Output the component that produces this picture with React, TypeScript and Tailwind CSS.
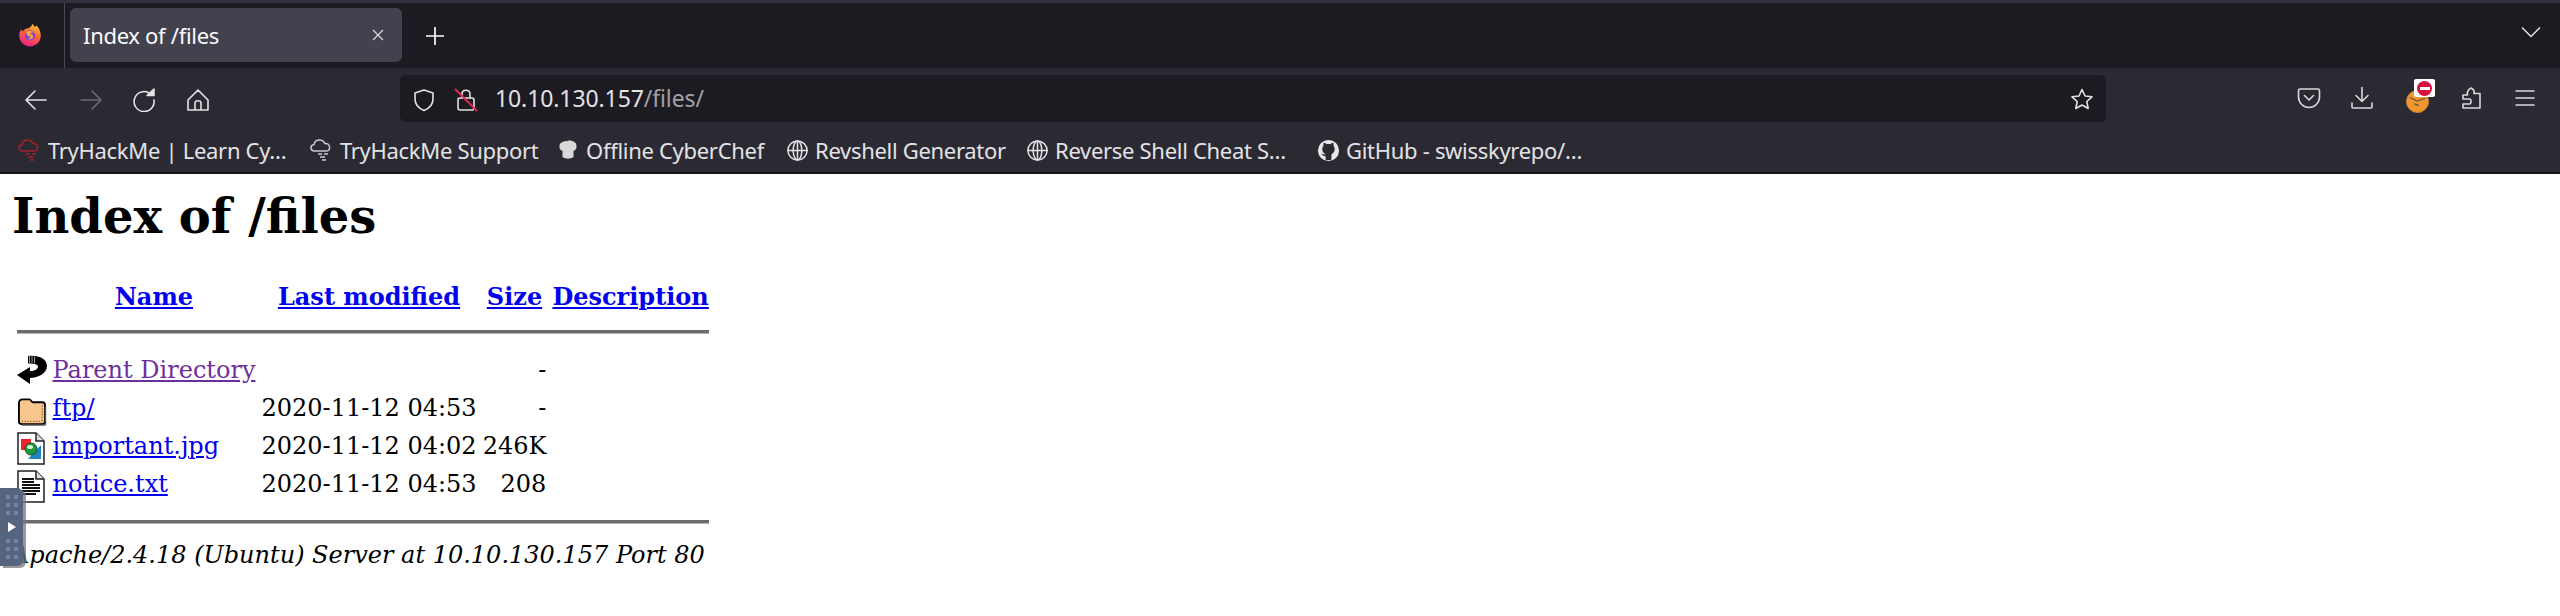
const ui = { fontFamily: '"Noto Sans", sans-serif' };

function Stroke({ className, children, box = 24 }: { className: string; children: React.ReactNode; box?: number }) {
  return (
    <svg viewBox={`0 0 ${box} ${box}`} className={className} fill="none" stroke="currentColor" strokeWidth="1.6" strokeLinecap="round" strokeLinejoin="round">
      {children}
    </svg>
  );
}

function FirefoxLogo() {
  return (
    <svg viewBox="0 0 24 24" className="w-6 h-6">
      <defs>
        <linearGradient id="ff" x1="0.7" y1="0" x2="0.3" y2="1">
          <stop offset="0" stopColor="#ffcf3a" />
          <stop offset="0.4" stopColor="#ff6a2c" />
          <stop offset="1" stopColor="#e8208a" />
        </linearGradient>
      </defs>
      <path d="M1.2 12.5C1.2 9 2.5 7.2 3.8 6.2C3.8 7.4 4.4 8 5 8.3C6.2 6.2 8.4 5.2 10.5 5.4C12.8 3.8 14 2.6 14.6.8C15.6 2 15.8 3 16.4 3.6C17.2 4.2 18 3.4 18.2 2.2C20.6 4.6 22.8 8 22.8 12.5C22.8 18.6 18 23.4 12 23.4C6 23.4 1.2 18.6 1.2 12.5Z" fill="url(#ff)" />
      <circle cx="12" cy="12.5" r="5" fill="#7542e5" />
      <path d="M8 9.500C10 7.400 14 7.600 15.500 10C13.500 9.200 12.600 10 12.400 11C14.500 11 15.600 12.600 15 14.400C14 16.400 11 16.800 9.200 15.600C11.400 15.800 12.800 14.800 12.600 13.600C10.600 13.800 9 12.600 8 9.500Z" fill="#ffa23c" />
    </svg>
  );
}

function Bookmark({ w, icon, children }: { w: string; icon: React.ReactNode; children: React.ReactNode }) {
  return (
    <div className={`flex items-center gap-[6px] shrink-0 ${w}`}>
      <span className="w-6 h-6 flex items-center justify-center shrink-0">{icon}</span>
      <span className="whitespace-nowrap text-[22px] tracking-[-0.3px] text-[#e3e3e6]">{children}</span>
    </div>
  );
}

function Globe() {
  return (
    <Stroke className="w-[23px] h-[23px] text-[#e3e3e6]">
      <circle cx="12" cy="12" r="10" />
      <ellipse cx="12" cy="12" rx="4.5" ry="10" />
      <path d="M2 12h20M12 2v20" />
    </Stroke>
  );
}

function Cloud({ red }: { red?: boolean }) {
  return (
    <svg viewBox="0 0 24 24" className={`w-6 h-6 ${red ? "text-[#a3222a]" : "text-[#c9c9cc]"}`} fill="none" stroke="currentColor" strokeWidth="1.5">
      <path d="M6 13H4.5C2.5 13 1 11.6 1 9.8C1 8 2.4 6.8 4 6.8C4.5 3.8 7 2 9.5 2C12 2 14 3.4 14.8 5.6C17 5 19.6 6.6 19.6 9.4C19.6 11.6 18 13 16 13H6Z" />
      <path d="M8 16h4M14 16h4M10 19h5M12 22h4" strokeWidth="1.3" />
    </svg>
  );
}

function ParentIcon() {
  return (
    <svg viewBox="0 0 30 33" className="w-[30px] h-[33px] block -mt-[2px]">
      <path d="M11 2C22 1 30 5 30 12C30 20 20 24 13 24L13 30L0 21L13 13L13 17C18 17 21 15 21 12.500C21 10.500 18 9.500 11 9.500Z" fill="#000" />
      <path d="M12.500 2V9.500M15 2V9.500M17.500 2.500V9.500" stroke="#9a9a9a" strokeWidth="1" />
    </svg>
  );
}

function FolderIcon() {
  return (
    <svg viewBox="0 0 32 30" className="w-[30px] h-[28px] block mt-[4px]">
      <path d="M2 6C2 3 3.500 1.500 6 1.500H13C15 1.500 15.500 4.500 17 4.500H27C29 4.500 30 6 30 8V25C30 27 29 28 27 28H5C3 28 2 27 2 25Z" fill="#f8c68c" stroke="#000" strokeWidth="2" />
      <path d="M5 25H27M27 8V25" stroke="#a06a30" strokeWidth="1.5" strokeDasharray="1.500 1.500" />
      <path d="M30.500 9V27.500C30.500 28.500 30 29 29 29H5" stroke="#555" strokeWidth="1.500" fill="none" />
    </svg>
  );
}

function ImageIcon() {
  return (
    <svg viewBox="0 0 28 33" className="w-[28px] h-[33px] block">
      <path d="M1 1H19L27 9V32H1Z" fill="#fff" stroke="#222" strokeWidth="1.500" />
      <path d="M19 1V9H27" fill="#ddd" stroke="#222" strokeWidth="1.500" />
      <rect x="4" y="7" width="10" height="11" fill="#f0232c" />
      <path d="M24 13V27H11Z" fill="#1f86c4" />
      <circle cx="14" cy="17" r="6" fill="#1a9a3c" stroke="#1b4d2a" strokeWidth="1" />
      <ellipse cx="13" cy="15" rx="3" ry="2" fill="#d9f3dc" />
    </svg>
  );
}

function TextIcon() {
  return (
    <svg viewBox="0 0 28 33" className="w-[28px] h-[33px] block">
      <path d="M1 1H19L27 9V32H1Z" fill="#fff" stroke="#222" strokeWidth="1.500" />
      <path d="M19 1V9H27" fill="#ddd" stroke="#222" strokeWidth="1.500" />
      <path d="M5 9H17M5 12H17M5 15H23M5 18H23M5 21H23M5 24H19" stroke="#111" strokeWidth="1.800" />
    </svg>
  );
}

function Row({ icon, name, date, size, visited }: { icon: React.ReactNode; name: string; date: string; size: string; visited?: boolean }) {
  return (
    <tr>
      <td className="p-[1.5px] align-top"><div className="flow-root h-[32px]">{icon}</div></td>
      <td className="p-[1.5px] align-top">
        <a href="#" className={`underline ${visited ? "text-[#6f2f9b]" : "text-[#0000ee]"}`}>{name}</a>
      </td>
      <td className="p-[1.5px] align-top text-right whitespace-nowrap">{date}</td>
      <td className="p-[1.5px] align-top text-right">{size}</td>
      <td className="p-[1.5px] align-top">&nbsp;</td>
    </tr>
  );
}

function HrRow({ className }: { className: string }) {
  return (
    <tr>
      <th colSpan={5} className={`px-[1.5px] ${className}`}>
        <div className="h-[4px] bg-[#6c6c6c] border-b border-[#b4b4b4]" />
      </th>
    </tr>
  );
}

function Dots() {
  return (
    <div className="grid grid-cols-2 gap-x-[4px] gap-y-[4px]">
      {[0, 1, 2, 3, 4, 5].map((i) => (
        <span key={i} className="w-[4px] h-[4px] bg-[#76839a]" />
      ))}
    </div>
  );
}

export default function App() {
  return (
    <div className="relative h-[616px] bg-white overflow-hidden" style={ui}>
      <div className="h-[3px] bg-[#32313d]" />
      {/* Tab bar */}
      <div className="h-[65px] bg-[#1c1b22] flex items-start text-[#fbfbfe]">
        <div className="w-[65px] h-full flex items-center pl-[18px] pb-[1px] border-r-[1px] border-[#4a4953] shrink-0">
          <FirefoxLogo />
        </div>
        <div className="mt-[5px] ml-[5px] w-[332px] h-[54px] rounded-[6px] bg-[#42414d] flex items-center pl-[13px] pr-[16px] shrink-0">
          <span className="text-[22px] tracking-[-0.3px] flex-1 whitespace-nowrap">Index of /files</span>
          <svg viewBox="0 0 16 16" className="w-4 h-4 text-[#d8d8dc]" fill="none" stroke="currentColor" strokeWidth="1.3"><path d="M3 3l10 10M13 3L3 13" /></svg>
        </div>
        <div className="ml-[21px] mt-[21px] shrink-0">
          <svg viewBox="0 0 24 24" className="w-6 h-6" fill="none" stroke="currentColor" strokeWidth="1.7"><path d="M12 3v18M3 12h18" /></svg>
        </div>
        <div className="ml-auto mr-[19px] mt-[23px] shrink-0">
          <svg viewBox="0 0 20 12" className="w-[20px] h-[12px] text-[#e3e3e6]" fill="none" stroke="currentColor" strokeWidth="1.5"><path d="M1 1.500L10 10.500L19 1.500" /></svg>
        </div>
      </div>
      {/* Nav toolbar */}
      <div className="h-[60px] bg-[#2b2a33] flex items-start text-[#e3e3e6]">
        <div className="w-[400px] h-[64px] flex items-center shrink-0 pl-[24px] pb-[1px]">
          <Stroke className="w-6 h-6"><path d="M22 12H2M11 3L2 12L11 21" /></Stroke>
          <Stroke className="w-6 h-6 ml-[31px] text-[#6b6a72]"><path d="M2 12H22M13 3L22 12L13 21" /></Stroke>
          <Stroke className="w-6 h-6 ml-[29px]"><path d="M18 5.500A10 10 0 1 0 22 12" /><path d="M15 7.500H22V1Z" fill="currentColor" /></Stroke>
          <Stroke className="w-6 h-6 ml-[30px]"><path d="M2 12L12 2L22 12V22H2ZM9 22V15C9 12 15 12 15 15V22" /></Stroke>
        </div>
        <div className="mt-[7px] w-[1706px] h-[47px] rounded-[6px] bg-[#1c1b22] flex items-center pl-[12px] pr-[12px] shrink-0">
          <Stroke className="w-6 h-6 mt-[2px]"><path d="M12 2L21 5V11C21 17 17 20.500 12 22.500C7 20.500 3 17 3 11V5Z" /></Stroke>
          <div className="relative w-6 h-6 ml-[18px] mt-[2px]">
            <Stroke className="w-6 h-6"><rect x="4" y="10" width="16" height="12" rx="2" /><path d="M8 10V6C8 1 16 1 16 6V10" /></Stroke>
            <svg viewBox="0 0 24 24" className="absolute inset-0 w-6 h-6 text-[#e22850]" fill="none" stroke="currentColor" strokeWidth="1.800"><path d="M1 1L23 23" /></svg>
          </div>
          <span className="ml-[17px] text-[23px] tracking-[-0.1px] whitespace-nowrap">10.10.130.157<span className="text-[#a0a0a6]">/files/</span></span>
          <Stroke className="w-6 h-6 ml-auto"><path d="M12 2.500L15 9L22 9.800L16.800 14.500L18.200 21.500L12 18L5.800 21.500L7.200 14.500L2 9.800L9 9Z" /></Stroke>
        </div>
        <div className="flex-1 flex items-center h-[60px] pl-[191px] text-[#d9d9dc]">
          <Stroke className="w-6 h-6 shrink-0"><path d="M3 3H21C22 3 22.500 4 22.500 5V11C22.500 17 17.500 21.500 12 21.500C6.500 21.500 1.500 17 1.500 11V5C1.500 4 2 3 3 3Z" /><path d="M7.500 9.500L12 14L16.500 9.500" /></Stroke>
          <Stroke className="w-6 h-6 ml-[29px] shrink-0"><path d="M12 1.500V15M6 9.500L12 15.500L18 9.500M2 17V21C2 22 2.500 22 3 22H21C21.500 22 22 22 22 21V17" /></Stroke>
          <div className="relative w-6 h-6 ml-[32px] shrink-0">
            <div className="w-[23px] h-[23px] mt-[4px] rounded-full bg-[#f0962e] border border-[#c8873c] flex items-center justify-center">
              <svg viewBox="0 0 20 20" className="w-[18px] h-[18px]" fill="none" stroke="#6d5a3c" strokeWidth="1.5"><path d="M1 5L9 9L18 6M6 12L11 14" /></svg>
            </div>
            <div className="absolute -top-[7px] left-[8px] w-[21px] h-[18px] rounded-[2px] bg-white flex items-center justify-center">
              <div className="w-[15px] h-[15px] rounded-full bg-[#d7103f] flex items-center justify-center"><div className="w-[10px] h-[3px] bg-white" /></div>
            </div>
          </div>
          <Stroke className="w-6 h-6 ml-[30px] shrink-0"><path d="M3 9H7.500C7 6 8 3.500 11 2C14 3.500 14.500 6 14 7.500H20V22H3V18H9.500C11.500 18 11.500 13 9.500 13H3Z" /></Stroke>
          <Stroke className="w-6 h-6 ml-[29px] shrink-0"><path d="M3 5H21M3 12H21M3 19H21" /></Stroke>
        </div>
      </div>
      {/* Bookmarks */}
      <div className="h-[44px] bg-[#2b2a33] flex items-center pl-[18px] border-b-[2px] border-[#17161c] box-content">
        <Bookmark w="w-[292px]" icon={<Cloud red />}>TryHackMe | Learn Cy…</Bookmark>
        <Bookmark w="w-[246px]" icon={<Cloud />}>TryHackMe Support</Bookmark>
        <Bookmark w="w-[229px]" icon={<svg viewBox="0 0 24 24" className="w-[22px] h-[22px]"><path d="M6 20V13C3 12 2 9 3 6C5 2 10 3 12 2C15 1 20 3 21 6C22 9 21 12 18 13V20C14 22 10 22 6 20Z" fill="#d8d8d8" /></svg>}>Offline CyberChef</Bookmark>
        <Bookmark w="w-[240px]" icon={<Globe />}>Revshell Generator</Bookmark>
        <Bookmark w="w-[291px]" icon={<Globe />}>Reverse Shell Cheat S…</Bookmark>
        <Bookmark w="w-[270px]" icon={
          <svg viewBox="0 0 24 24" className="w-[23px] h-[23px]">
            <circle cx="12" cy="12" r="11" fill="#e8e8e8" />
            <path d="M9 22V18C6 18 5 16 4.500 15C6 15 6.500 16.500 9 16C7 15 5.500 13.500 5.500 10.500C5.500 9 6 8 6.800 7C6.500 6 6.600 5 7 4C8.500 4 9.500 5 10 5.500C11 5.200 13 5.200 14 5.500C14.500 5 15.500 4 17 4C17.400 5 17.500 6 17.200 7C18 8 18.500 9 18.500 10.500C18.500 13.500 17 15 15 16C15.500 17 15 18 15 22Z" fill="#2b2a33" />
          </svg>
        }>GitHub - swisskyrepo/…</Bookmark>
      </div>
      {/* Page */}
      <div className="px-3 text-black text-[24px] leading-[28px]" style={{ fontFamily: '"DejaVu Serif", serif' }}>
        <h1 className="text-[48px] leading-[56px] font-bold mt-[14px] mb-[34px]">Index of /files</h1>
        <table className="border-separate border-spacing-[3px]">
          <tbody>
            <tr>
              <th className="p-[1.5px]"><span className="block w-[30px]" /></th>
              <th className="p-[1.5px] text-center font-bold"><a href="#" className="underline text-[#0000ee]">Name</a></th>
              <th className="p-[1.5px] text-center font-bold whitespace-nowrap"><a href="#" className="underline text-[#0000ee]">Last modified</a></th>
              <th className="p-[1.5px] text-center font-bold"><a href="#" className="underline text-[#0000ee]">Size</a></th>
              <th className="p-[1.5px] text-center font-bold"><a href="#" className="underline text-[#0000ee]">Description</a></th>
            </tr>
            <HrRow className="pt-[15px] pb-[17px]" />
            <Row icon={<ParentIcon />} name="Parent Directory" date="" size="-" visited />
            <Row icon={<FolderIcon />} name="ftp/" date="2020-11-12 04:53" size="-" />
            <Row icon={<ImageIcon />} name="important.jpg" date="2020-11-12 04:02" size="246K" />
            <Row icon={<TextIcon />} name="notice.txt" date="2020-11-12 04:53" size="208" />
            <HrRow className="pt-[14px] pb-[9px]" />
          </tbody>
        </table>
        <address className="italic mt-[5px]">Apache/2.4.18 (Ubuntu) Server at 10.10.130.157 Port 80</address>
      </div>
      {/* Floating widget */}
      <div className="absolute left-0 top-[488px] w-[23px] h-[78px] rounded-r-[6px] bg-[#56657f] shadow-[3px_2px_0_rgba(120,120,120,0.75)] flex flex-col items-center justify-between py-[7px]">
        <Dots />
        <svg viewBox="0 0 8 10" className="w-[8px] h-[10px]"><path d="M0 0L8 5L0 10Z" fill="#fff" /></svg>
        <Dots />
      </div>
    </div>
  );
}
